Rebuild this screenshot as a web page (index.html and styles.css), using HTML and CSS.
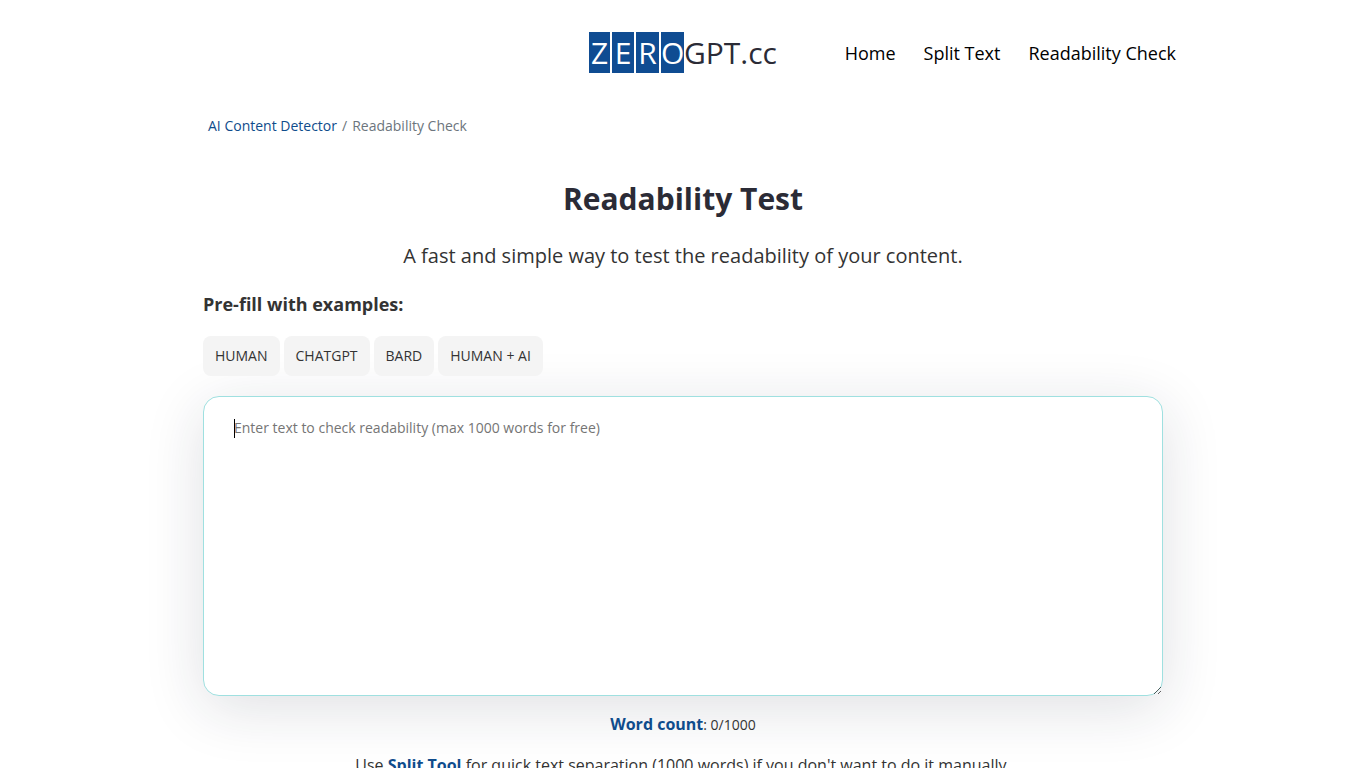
FILE: index.html
```html
<!DOCTYPE html>
<html lang="en">
<head>
<meta charset="utf-8">
<meta name="viewport" content="width=device-width, initial-scale=1">
<title>Readability Test</title>
<link rel="stylesheet" href="styles.css">
</head>
<body>
<header class="site-header">
  <a class="logo" href="#" aria-label="ZEROGPT.cc"><span class="tile tile-z">Z</span><span class="tile tile-e">E</span><span class="tile">R</span><span class="tile">O</span><span>GPT.cc</span></a>
  <nav class="site-nav">
    <a href="#">Home</a>
    <a href="#">Split Text</a>
    <a href="#">Readability Check</a>
  </nav>
</header>
<main class="page">
  <nav class="breadcrumb" aria-label="Breadcrumb">
    <a href="#">AI Content Detector</a><span>/</span><span>Readability Check</span>
  </nav>
  <h1 class="title">Readability Test</h1>
  <p class="lead">A fast and simple way to test the readability of your content.</p>
  <h2 class="examples-title">Pre-fill with examples:</h2>
  <div class="examples">
    <button type="button">HUMAN</button>
    <button type="button">CHATGPT</button>
    <button type="button">BARD</button>
    <button type="button">HUMAN + AI</button>
  </div>
  <div class="editor-wrap">
    <textarea class="editor" aria-label="Text to check" placeholder="Enter text to check readability (max 1000 words for free)"></textarea>
    <span class="caret" aria-hidden="true"></span>
  </div>
  <p class="count"><strong>Word count</strong>: 0/1000</p>
  <p class="hint">Use <a href="#">Split Tool</a> for quick text separation (1000 words) if you don't want to do it manually.</p>
</main>
</body>
</html>
```
FILE: styles.css
```css
* { box-sizing: border-box; }
html { scrollbar-width: none; }
body {
  margin: 0;
  background: #fff;
  color: #333;
  font-family: "Open Sans", "Noto Sans", sans-serif;
  font-size: 16px;
  line-height: 24px;
}
a { color: #0f4c8c; text-decoration: none; }
.site-header {
  display: grid;
  grid-template-columns: 1fr auto 1fr;
  align-items: center;
  max-width: 1366px;
  margin: 0 auto;
  padding: 32px 190px 31px;
}
.logo {
  grid-column: 2;
  display: flex;
  color: #2b2b36;
  font-size: 30px;
  line-height: 41px;
}
.tile {
  width: 23px;
  background: #0f4c92;
  color: #fff;
  text-align: center;
}
.tile + .tile { margin-left: 2px; }
.tile-z { width: 21px; }
.tile-e { width: 22px; }
.site-nav {
  display: flex;
  justify-content: flex-end;
  gap: 28px;
  font-size: 18px;
  white-space: nowrap;
}
.site-nav a { color: #000; }
.page {
  max-width: 960px;
  margin: 0 auto;
}
.breadcrumb {
  display: flex;
  gap: 5px;
  padding: 10px 5px;
  color: #6c757d;
  font-size: 14px;
}
.title {
  margin: 28px 0 0;
  color: #2b2b36;
  font-size: 30px;
  line-height: 46px;
  text-align: center;
}
.lead {
  margin: 19px 0 0;
  font-size: 20px;
  line-height: 30px;
  text-align: center;
}
.examples-title {
  margin: 19px 0 0;
  font-size: 18px;
  line-height: 28px;
}
.examples {
  display: flex;
  gap: 4px;
  margin-top: 18px;
}
.examples button {
  height: 40px;
  padding: 0 12px;
  border: 0;
  border-radius: 8px;
  background: #f4f4f4;
  color: #333;
  font: inherit;
  font-size: 14px;
}
.editor-wrap {
  position: relative;
  margin-top: 20px;
}
.editor {
  display: block;
  width: 100%;
  height: 300px;
  padding: 20px 30px;
  border: 1px solid #9fe0e0;
  border-radius: 16px;
  outline: 0;
  box-shadow: 0 12px 60px rgba(29, 36, 56, 0.14);
  color: #333;
  font: inherit;
  font-size: 14px;
  line-height: 21px;
  resize: vertical;
}
.editor::placeholder { color: #757575; }
.caret {
  position: absolute;
  top: 23px;
  left: 31px;
  width: 1px;
  height: 19px;
  background: #000;
}
.examples, .count, .hint { position: relative; }
.examples { z-index: 1; }
.count {
  margin: 16px 0 0;
  font-size: 14px;
  text-align: center;
}
.count strong { color: #0f4c8c; font-size: 16px; }
.hint {
  margin: 16px 0 0;
  text-align: center;
}
.hint a { font-weight: 700; }
```
